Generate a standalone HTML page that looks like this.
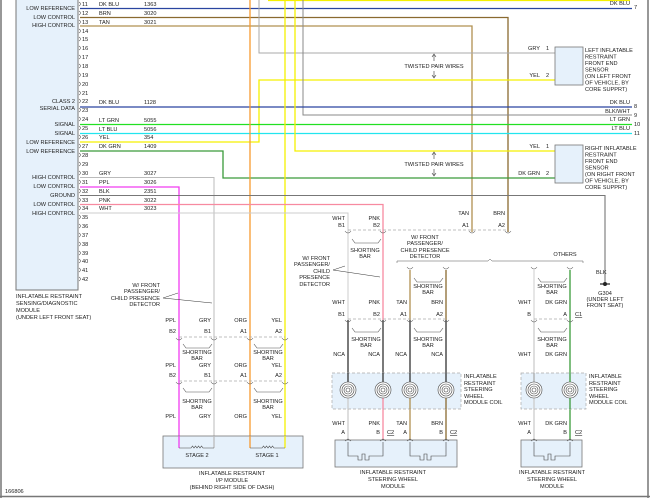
<!DOCTYPE html>
<html><head><meta charset="utf-8"><style>
html,body{margin:0;padding:0;background:#fff;}
svg{display:block;font-family:"Liberation Sans",sans-serif;}
text{font-size:5.6px;fill:#222;}
.r{text-anchor:end}.m{text-anchor:middle}
</style></head><body>
<svg width="650" height="498" viewBox="0 0 650 498" xmlns="http://www.w3.org/2000/svg">
<rect x="0" y="0" width="650" height="498" fill="#fff"/>
<line x1="1" y1="0" x2="1" y2="498" stroke="#777" stroke-width="1.5"/>
<line x1="648" y1="0" x2="648" y2="498" stroke="#777" stroke-width="1.5"/>
<line x1="0" y1="496.5" x2="650" y2="496.5" stroke="#777" stroke-width="1.5"/>

<!-- left module -->
<rect x="16" y="-2" width="62" height="292" fill="#e6f1fb" stroke="#777" stroke-width="1"/>
<g class="lbl">
<text x="75" y="10" class="r">LOW REFERENCE</text>
<text x="75" y="19" class="r">LOW CONTROL</text>
<text x="75" y="27" class="r">HIGH CONTROL</text>
<text x="75" y="103" class="r">CLASS 2</text>
<text x="75" y="110" class="r">SERIAL DATA</text>
<text x="75" y="126" class="r">SIGNAL</text>
<text x="75" y="135" class="r">SIGNAL</text>
<text x="75" y="144" class="r">LOW REFERENCE</text>
<text x="75" y="153" class="r">LOW REFERENCE</text>
<text x="75" y="179" class="r">HIGH CONTROL</text>
<text x="75" y="188" class="r">LOW CONTROL</text>
<text x="75" y="197" class="r">GROUND</text>
<text x="75" y="206" class="r">LOW CONTROL</text>
<text x="75" y="215" class="r">HIGH CONTROL</text>
</g>
<g font-size="5.5">
<text x="82" y="6">11</text><text x="82" y="15">12</text><text x="82" y="24">13</text><text x="82" y="33">14</text>
<text x="82" y="41">15</text><text x="82" y="50">16</text><text x="82" y="59">17</text><text x="82" y="68">18</text>
<text x="82" y="77">19</text><text x="82" y="86">20</text><text x="82" y="95">21</text><text x="82" y="103">22</text>
<text x="82" y="112">23</text><text x="82" y="121">24</text><text x="82" y="130">25</text><text x="82" y="139">26</text>
<text x="82" y="148">27</text><text x="82" y="157">28</text><text x="82" y="166">29</text><text x="82" y="175">30</text>
<text x="82" y="184">31</text><text x="82" y="193">32</text><text x="82" y="202">33</text><text x="82" y="210">34</text>
<text x="82" y="219">35</text><text x="82" y="228">36</text><text x="82" y="237">37</text><text x="82" y="246">38</text>
<text x="82" y="255">39</text><text x="82" y="263">40</text><text x="82" y="272">41</text><text x="82" y="281">42</text>
</g>
<path d="M79,2 q3,2 0,4 M79,11 q3,2 0,4 M79,20 q3,2 0,4 M79,29 q3,2 0,4 M79,37 q3,2 0,4 M79,46 q3,2 0,4 M79,55 q3,2 0,4 M79,64 q3,2 0,4 M79,73 q3,2 0,4 M79,82 q3,2 0,4 M79,91 q3,2 0,4 M79,99 q3,2 0,4 M79,108 q3,2 0,4 M79,117 q3,2 0,4 M79,126 q3,2 0,4 M79,135 q3,2 0,4 M79,144 q3,2 0,4 M79,153 q3,2 0,4 M79,162 q3,2 0,4 M79,171 q3,2 0,4 M79,180 q3,2 0,4 M79,189 q3,2 0,4 M79,198 q3,2 0,4 M79,206 q3,2 0,4 M79,215 q3,2 0,4 M79,224 q3,2 0,4 M79,233 q3,2 0,4 M79,242 q3,2 0,4 M79,251 q3,2 0,4 M79,259 q3,2 0,4 M79,268 q3,2 0,4 M79,277 q3,2 0,4" fill="none" stroke="#555" stroke-width="0.6"/>
<text x="16" y="298">INFLATABLE RESTRAINT</text>
<text x="16" y="305">SENSING/DIAGNOSTIC</text>
<text x="16" y="312">MODULE</text>
<text x="16" y="319">(UNDER LEFT FRONT SEAT)</text>

<!-- wire labels -->
<g>
<text x="99" y="6">DK BLU</text><text x="144" y="6">1363</text>
<text x="99" y="15">BRN</text><text x="144" y="15">3020</text>
<text x="99" y="24">TAN</text><text x="144" y="24">3021</text>
<text x="99" y="104">DK BLU</text><text x="144" y="104">1128</text>
<text x="99" y="122">LT GRN</text><text x="144" y="122">5055</text>
<text x="99" y="131">LT BLU</text><text x="144" y="131">5056</text>
<text x="99" y="139">YEL</text><text x="144" y="139">354</text>
<text x="99" y="148">DK GRN</text><text x="144" y="148">1409</text>
<text x="99" y="175">GRY</text><text x="144" y="175">3027</text>
<text x="99" y="184">PPL</text><text x="144" y="184">3026</text>
<text x="99" y="193">BLK</text><text x="144" y="193">2351</text>
<text x="99" y="202">PNK</text><text x="144" y="202">3022</text>
<text x="99" y="210">WHT</text><text x="144" y="210">3023</text>
</g>

<!-- wires -->
<g fill="none" stroke-width="1.3">
<path d="M268,0.5 H630" stroke="#f5f000"/>
<path d="M80,8.5 H632" stroke="#2a45a0"/>
<path d="M80,17.5 H508 V232" stroke="#8a6a30"/>
<path d="M80,26 H472 V232" stroke="#b09050"/>
<path d="M259,0 V53 H555" stroke="#aaa" stroke-width="1"/>
<path d="M80,142 H259 V80 H555" stroke="#f5f000"/>
<path d="M303,0 V115 H632" stroke="#888" stroke-width="1"/>
<path d="M80,107 H632" stroke="#2a45a0"/>
<path d="M80,124.5 H632" stroke="#22e022"/>
<path d="M80,133.5 H632" stroke="#22e5ee"/>
<path d="M295,0 V151 H555" stroke="#f5f000"/>
<path d="M80,151 H223 V178 H555" stroke="#3a9a3a"/>
<path d="M80,177.5 H214 V440" stroke="#bbb" stroke-width="1"/>
<path d="M250,0 V440" stroke="#f79a30"/>
<path d="M285,0 V440" stroke="#f5f000"/>
<path d="M80,187 H179 V440" stroke="#f03cf0"/>
<path d="M80,195.5 H605 V283" stroke="#777" stroke-width="1.1"/>
<path d="M80,204.5 H383 V232" stroke="#f78aa0"/>
<path d="M80,213 H348 V232" stroke="#ccc" stroke-width="1"/>
<!-- steering lower wires -->
<path d="M348,232 V320" stroke="#ccc" stroke-width="1"/>
<path d="M383,232 V320" stroke="#f78aa0"/>
<path d="M410,270 V320" stroke="#b09050"/>
<path d="M446,270 V320" stroke="#8a6a30"/>
<path d="M534,270 V320" stroke="#ccc" stroke-width="1"/>
<path d="M570,270 V320" stroke="#3a9a3a"/>
<path d="M348,320 V390 M383,320 V390 M410,320 V390 M446,320 V390" stroke="#333"/>
<path d="M534,320 V390" stroke="#ccc"/>
<path d="M570,320 V390" stroke="#3a9a3a"/>
<path d="M348,390 V440" stroke="#ccc"/>
<path d="M383,390 V440" stroke="#f78aa0"/>
<path d="M410,390 V440" stroke="#b09050"/>
<path d="M446,390 V440" stroke="#8a6a30"/>
<path d="M534,390 V440" stroke="#ccc"/>
<path d="M570,390 V440" stroke="#3a9a3a"/>
</g>

<!-- right labels -->
<text x="630" y="5" class="r">DK BLU</text><text x="634" y="9">7</text>
<text x="630" y="104" class="r">DK BLU</text><text x="634" y="108">8</text>
<text x="630" y="113" class="r">BLK/WHT</text><text x="634" y="117">9</text>
<text x="630" y="121" class="r">LT GRN</text><text x="634" y="126">10</text>
<text x="630" y="130" class="r">LT BLU</text><text x="634" y="135">11</text>

<!-- sensors -->
<rect x="555" y="47" width="28" height="38" fill="#e6f1fb" stroke="#777" stroke-width="0.8"/>
<rect x="555" y="145" width="28" height="38" fill="#e6f1fb" stroke="#777" stroke-width="0.8"/>
<text x="540" y="50" class="r">GRY</text><text x="546" y="50">1</text>
<text x="540" y="77" class="r">YEL</text><text x="546" y="77">2</text>
<text x="540" y="148" class="r">YEL</text><text x="546" y="148">1</text>
<text x="540" y="175" class="r">DK GRN</text><text x="546" y="175">2</text>
<g>
<text x="585" y="52">LEFT INFLATABLE</text><text x="585" y="58.5">RESTRAINT</text><text x="585" y="65">FRONT END</text><text x="585" y="71.5">SENSOR</text><text x="585" y="78">(ON LEFT FRONT</text><text x="585" y="84.5">OF VEHICLE, BY</text><text x="585" y="91">CORE SUPPRT)</text>
<text x="585" y="150">RIGHT INFLATABLE</text><text x="585" y="156.5">RESTRAINT</text><text x="585" y="163">FRONT END</text><text x="585" y="169.5">SENSOR</text><text x="585" y="176">(ON RIGHT FRONT</text><text x="585" y="182.5">OF VEHICLE, BY</text><text x="585" y="189">CORE SUPPRT)</text>
</g>
<text x="434" y="68" class="m">TWISTED PAIR WIRES</text>
<text x="434" y="166" class="m">TWISTED PAIR WIRES</text>
<path d="M434,55 V61 M432,57 L434,54 L436,57 M434,71 V77 M432,75 L434,78 L436,75 M434,153 V159 M432,155 L434,152 L436,155 M434,169 V175 M432,173 L434,176 L436,173" stroke="#333" stroke-width="0.6" fill="none"/>

<!-- ground -->
<text x="596" y="274">BLK</text>
<path d="M600,284 H610" stroke="#222" stroke-width="1.2"/>
<circle cx="605" cy="284" r="2" fill="#222"/>
<text x="605" y="295" class="m">G304</text>
<text x="605" y="301" class="m">(UNDER LEFT</text>
<text x="605" y="307" class="m">FRONT SEAT)</text>

<!-- dashed connector lines -->
<g stroke="#aaa" stroke-width="0.7" stroke-dasharray="3,2" fill="none">
<path d="M348,230 H508"/>
<path d="M348,319 H446"/><path d="M534,319 H570"/>
<path d="M179,337 H285"/><path d="M179,381 H285"/>
<rect x="332" y="373" width="129" height="36" fill="#e6f1fb"/>
<rect x="521" y="373" width="65" height="36" fill="#e6f1fb"/>
</g>
<!-- redraw wires over dashed coil boxes -->
<g fill="none" stroke-width="1.3">
<path d="M348,373 V390 M383,373 V390 M410,373 V390 M446,373 V390" stroke="#333"/>
<path d="M534,373 V390" stroke="#aaa"/><path d="M570,373 V390" stroke="#3a9a3a"/>
<path d="M348,390 V409" stroke="#ccc"/><path d="M383,390 V409" stroke="#f78aa0"/>
<path d="M410,390 V409" stroke="#b09050"/><path d="M446,390 V409" stroke="#8a6a30"/>
<path d="M534,390 V409" stroke="#ccc"/><path d="M570,390 V409" stroke="#3a9a3a"/>
</g>
<!-- coils -->
<g fill="#fff" stroke="#444" stroke-width="0.6">
<g transform="translate(348,390)"><circle r="8"/><circle r="6" fill="none"/><circle r="4" fill="none"/><circle r="2" fill="none"/></g>
<g transform="translate(383,390)"><circle r="8"/><circle r="6" fill="none"/><circle r="4" fill="none"/><circle r="2" fill="none"/></g>
<g transform="translate(410,390)"><circle r="8"/><circle r="6" fill="none"/><circle r="4" fill="none"/><circle r="2" fill="none"/></g>
<g transform="translate(446,390)"><circle r="8"/><circle r="6" fill="none"/><circle r="4" fill="none"/><circle r="2" fill="none"/></g>
<g transform="translate(534,390)"><circle r="8"/><circle r="6" fill="none"/><circle r="4" fill="none"/><circle r="2" fill="none"/></g>
<g transform="translate(570,390)"><circle r="8"/><circle r="6" fill="none"/><circle r="4" fill="none"/><circle r="2" fill="none"/></g>
</g>
<text x="464" y="378">INFLATABLE</text><text x="464" y="385">RESTRAINT</text><text x="464" y="391">STEERING</text><text x="464" y="398">WHEEL</text><text x="464" y="404">MODULE COIL</text>
<text x="589" y="378">INFLATABLE</text><text x="589" y="385">RESTRAINT</text><text x="589" y="391">STEERING</text><text x="589" y="398">WHEEL</text><text x="589" y="404">MODULE COIL</text>

<!-- steering modules -->
<rect x="335" y="440" width="122" height="27" fill="#e6f1fb" stroke="#777" stroke-width="0.8"/>
<rect x="521" y="440" width="61" height="27" fill="#e6f1fb" stroke="#777" stroke-width="0.8"/>
<g fill="none" stroke="#444" stroke-width="0.6">
<path d="M348,442 V456 H358 V460 H362 V454 H365 V460 H369 V456 H383 V442"/>
<path d="M410,442 V456 H420 V460 H424 V454 H427 V460 H431 V456 H446 V442"/>
<path d="M534,442 V456 H544 V460 H548 V454 H551 V460 H555 V456 H570 V442"/>
</g>
<text x="393" y="474" class="m">INFLATABLE RESTRAINT</text><text x="393" y="481" class="m">STEERING WHEEL</text><text x="393" y="488" class="m">MODULE</text>
<text x="552" y="474" class="m">INFLATABLE RESTRAINT</text><text x="552" y="481" class="m">STEERING WHEEL</text><text x="552" y="488" class="m">MODULE</text>

<!-- steering labels -->
<text x="345" y="220" class="r">WHT</text><text x="380" y="220" class="r">PNK</text><text x="469" y="215" class="r">TAN</text><text x="505" y="215" class="r">BRN</text>
<text x="345" y="227" class="r">B1</text><text x="380" y="227" class="r">B2</text><text x="469" y="227" class="r">A1</text><text x="505" y="227" class="r">A2</text>
<text x="425" y="239" class="m">W/ FRONT</text><text x="425" y="245" class="m">PASSENGER/</text><text x="425" y="252" class="m">CHILD PRESENCE</text><text x="425" y="258" class="m">DETECTOR</text>
<text x="565" y="256" class="m">OTHERS</text>
<path d="M397,263 V261 H488 L490,259 L492,261 H583 V263" stroke="#555" stroke-width="0.5" fill="none"/>
<text x="365" y="252" class="m">SHORTING</text><text x="365" y="258" class="m">BAR</text>
<text x="428" y="288" class="m">SHORTING</text><text x="428" y="294" class="m">BAR</text>
<text x="552" y="288" class="m">SHORTING</text><text x="552" y="294" class="m">BAR</text>
<text x="366" y="341" class="m">SHORTING</text><text x="366" y="347" class="m">BAR</text>
<text x="428" y="341" class="m">SHORTING</text><text x="428" y="347" class="m">BAR</text>
<text x="552" y="341" class="m">SHORTING</text><text x="552" y="347" class="m">BAR</text>
<text x="345" y="304" class="r">WHT</text><text x="380" y="304" class="r">PNK</text><text x="407" y="304" class="r">TAN</text><text x="443" y="304" class="r">BRN</text>
<text x="531" y="304" class="r">WHT</text><text x="567" y="304" class="r">DK GRN</text>
<text x="345" y="316" class="r">B1</text><text x="380" y="316" class="r">B2</text><text x="407" y="316" class="r">A1</text><text x="443" y="316" class="r">A2</text>
<text x="531" y="316" class="r">B</text><text x="567" y="316" class="r">A</text><text x="575" y="316" text-decoration="underline">C1</text>
<text x="345" y="356" class="r">NCA</text><text x="380" y="356" class="r">NCA</text><text x="407" y="356" class="r">NCA</text><text x="443" y="356" class="r">NCA</text>
<text x="531" y="356" class="r">WHT</text><text x="567" y="356" class="r">DK GRN</text>
<text x="345" y="425" class="r">WHT</text><text x="380" y="425" class="r">PNK</text><text x="407" y="425" class="r">TAN</text><text x="443" y="425" class="r">BRN</text>
<text x="531" y="425" class="r">WHT</text><text x="567" y="425" class="r">DK GRN</text>
<text x="345" y="434" class="r">A</text><text x="380" y="434" class="r">B</text><text x="407" y="434" class="r">A</text><text x="443" y="434" class="r">B</text>
<text x="531" y="434" class="r">A</text><text x="567" y="434" class="r">B</text>
<text x="387" y="434" text-decoration="underline">C2</text><text x="450" y="434" text-decoration="underline">C2</text><text x="575" y="434" text-decoration="underline">C2</text>
<!-- mid annotation -->
<text x="330" y="260" class="r">W/ FRONT</text><text x="330" y="266" class="r">PASSENGER/</text><text x="330" y="273" class="r">CHILD</text><text x="330" y="279" class="r">PRESENCE</text><text x="330" y="286" class="r">DETECTOR</text>
<path d="M333,270 L345,266 M333,270 L380,277" stroke="#333" stroke-width="0.5"/>
<!-- shorting bar shapes -->
<g fill="none" stroke="#555" stroke-width="0.6">
<path d="M352,239 l3,4 h23 l3,-4"/><path d="M414,278 l3,4 h23 l3,-4"/><path d="M538,278 l3,4 h23 l3,-4"/>
<path d="M352,328 l3,4 h23 l3,-4"/><path d="M414,328 l3,4 h23 l3,-4"/><path d="M538,328 l3,4 h23 l3,-4"/>
<path d="M183,344 l3,4 h23 l3,-4"/><path d="M254,344 l3,4 h23 l3,-4"/>
<path d="M183,388 l3,4 h23 l3,-4"/><path d="M254,388 l3,4 h23 l3,-4"/>
</g>

<!-- IP module -->
<rect x="163" y="436" width="140" height="32" fill="#e6f1fb" stroke="#777" stroke-width="0.8"/>
<g fill="none" stroke-width="1.3">
<path d="M179,436 V448" stroke="#f03cf0"/><path d="M214,436 V448" stroke="#bbb"/>
<path d="M250,436 V448" stroke="#f79a30"/><path d="M285,436 V448" stroke="#f5f000"/>
</g>
<path d="M179,448 H191 l1.5,-2 l1.5,2 l1.5,-2 l1.5,2 l1.5,-2 l1.5,2 l1.5,-2 l1.5,2 H214 M250,448 H262 l1.5,-2 l1.5,2 l1.5,-2 l1.5,2 l1.5,-2 l1.5,2 l1.5,-2 l1.5,2 H285" fill="none" stroke="#444" stroke-width="0.6"/>
<text x="197" y="457" class="m">STAGE 2</text><text x="267" y="457" class="m">STAGE 1</text>
<text x="232" y="475" class="m">INFLATABLE RESTRAINT</text><text x="232" y="482" class="m">I/P MODULE</text><text x="232" y="489" class="m">(BEHIND RIGHT SIDE OF DASH)</text>
<text x="176" y="322" class="r">PPL</text><text x="211" y="322" class="r">GRY</text><text x="247" y="322" class="r">ORG</text><text x="282" y="322" class="r">YEL</text>
<text x="176" y="333" class="r">B2</text><text x="211" y="333" class="r">B1</text><text x="247" y="333" class="r">A1</text><text x="282" y="333" class="r">A2</text>
<text x="197" y="354" class="m">SHORTING</text><text x="197" y="360" class="m">BAR</text><text x="268" y="354" class="m">SHORTING</text><text x="268" y="360" class="m">BAR</text>
<text x="176" y="367" class="r">PPL</text><text x="211" y="367" class="r">GRY</text><text x="247" y="367" class="r">ORG</text><text x="282" y="367" class="r">YEL</text>
<text x="176" y="377" class="r">B2</text><text x="211" y="377" class="r">B1</text><text x="247" y="377" class="r">A1</text><text x="282" y="377" class="r">A2</text>
<text x="197" y="403" class="m">SHORTING</text><text x="197" y="409" class="m">BAR</text><text x="268" y="403" class="m">SHORTING</text><text x="268" y="409" class="m">BAR</text>
<text x="176" y="418" class="r">PPL</text><text x="211" y="418" class="r">GRY</text><text x="247" y="418" class="r">ORG</text><text x="282" y="418" class="r">YEL</text>
<text x="160" y="287" class="r">W/ FRONT</text><text x="160" y="293" class="r">PASSENGER/</text><text x="160" y="300" class="r">CHILD PRESENCE</text><text x="160" y="306" class="r">DETECTOR</text>
<path d="M163,298 L178,293 M163,298 L212,303" stroke="#333" stroke-width="0.5"/>
<!-- connector cups -->
<g fill="none" stroke="#555" stroke-width="0.6">
<path d="M345,231 q3,4 6,0 M380,231 q3,4 6,0 M469,231 q3,4 6,0 M505,231 q3,4 6,0"/>
<path d="M407,267 q3,4 6,0 M443,267 q3,4 6,0 M531,267 q3,4 6,0 M567,267 q3,4 6,0"/>
<path d="M345,320 q3,4 6,0 M380,320 q3,4 6,0 M407,320 q3,4 6,0 M443,320 q3,4 6,0 M531,320 q3,4 6,0 M567,320 q3,4 6,0"/>
<path d="M176,338 q3,4 6,0 M211,338 q3,4 6,0 M247,338 q3,4 6,0 M282,338 q3,4 6,0"/>
<path d="M176,382 q3,4 6,0 M211,382 q3,4 6,0 M247,382 q3,4 6,0 M282,382 q3,4 6,0"/>
<path d="M345,441 l3,-2 l3,2 M380,441 l3,-2 l3,2 M407,441 l3,-2 l3,2 M443,441 l3,-2 l3,2 M531,441 l3,-2 l3,2 M567,441 l3,-2 l3,2"/>
</g>
<text x="5" y="493">166806</text>
</svg>
</body></html>
